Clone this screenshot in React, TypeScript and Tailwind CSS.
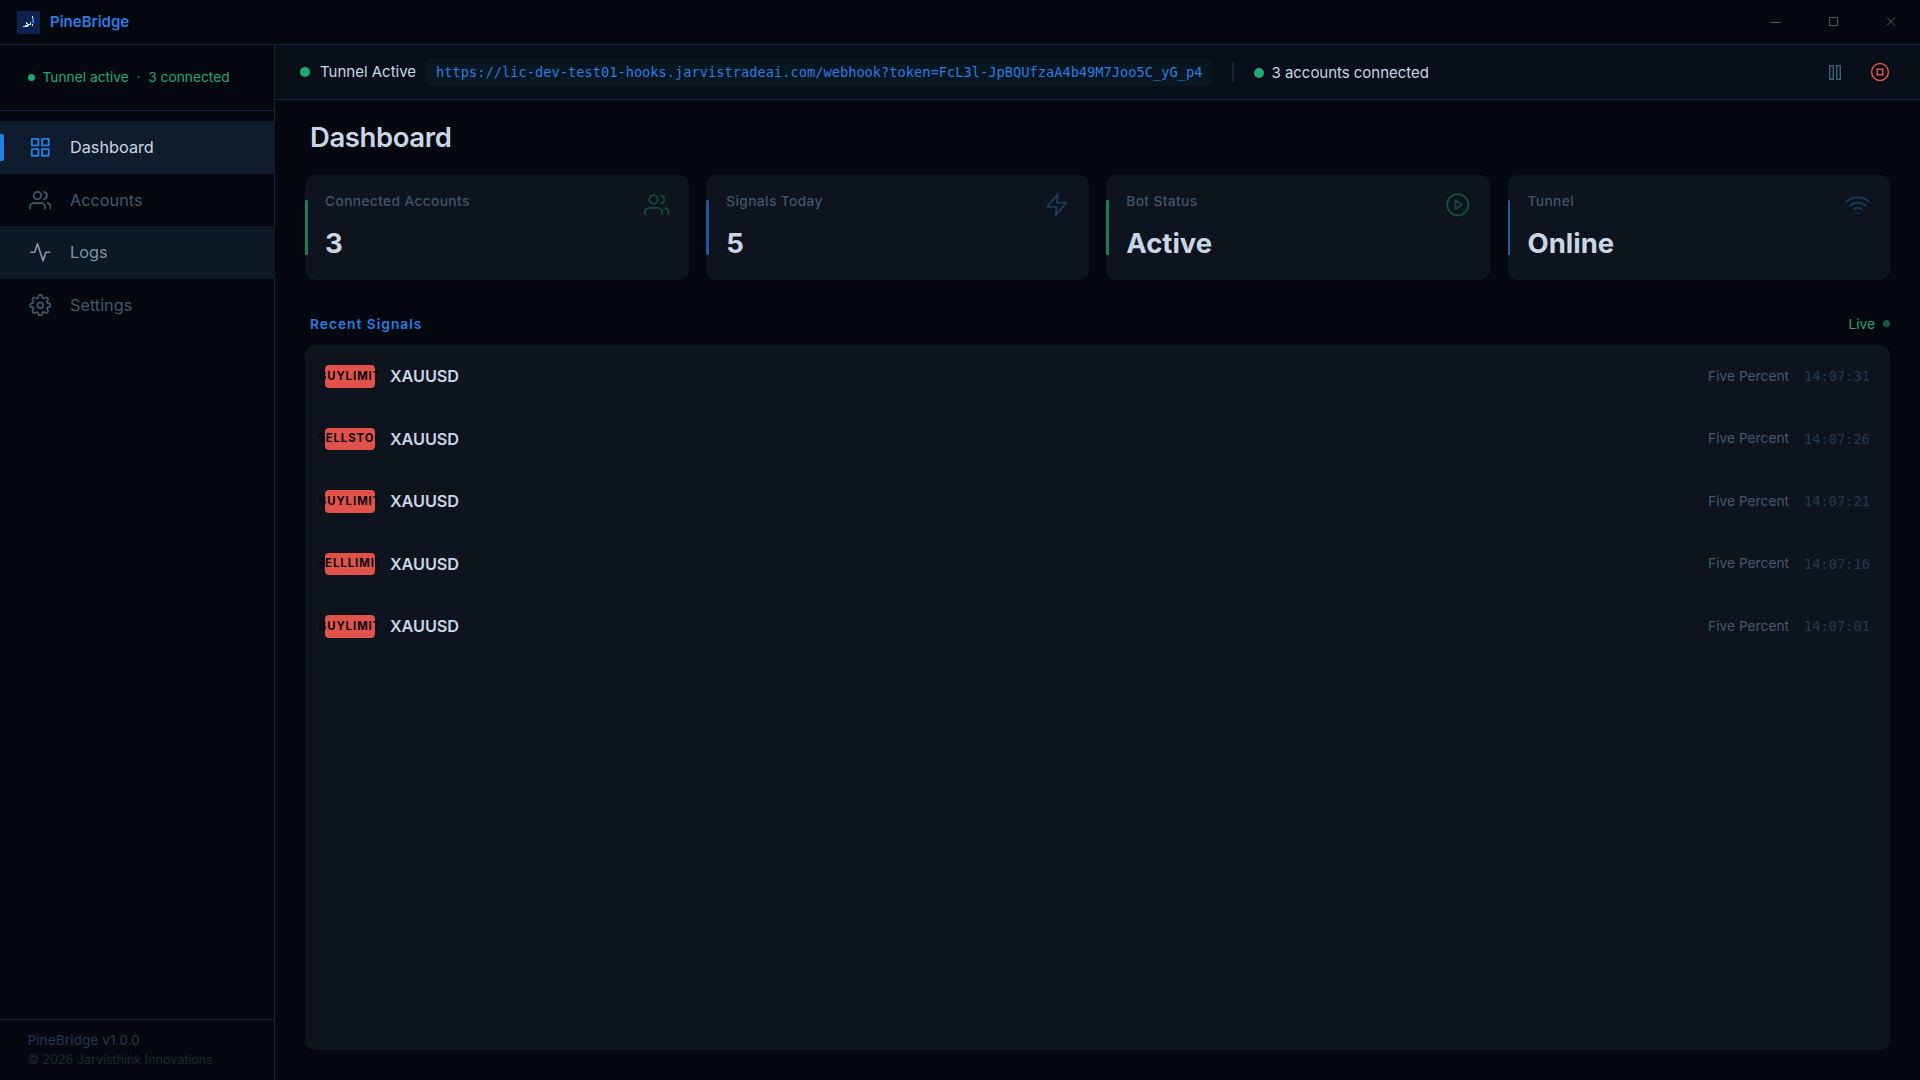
import type { ReactNode } from 'react';
import type { IconType } from 'react-icons';
import { FiActivity, FiGrid, FiPlayCircle, FiSettings, FiUsers, FiWifi, FiZap } from 'react-icons/fi';
import { cva } from 'class-variance-authority';
import clsx from 'clsx';

interface NavItem {
  label: string;
  icon: IconType;
  state: 'active' | 'hover' | 'idle';
}

interface Stat {
  label: string;
  value: string;
  icon: IconType;
  tone: 'green' | 'blue' | 'sky';
}

interface Signal {
  side: string;
  symbol: string;
  account: string;
  time: string;
}

const WEBHOOK_URL =
  'https://lic-dev-test01-hooks.jarvistradeai.com/webhook?token=FcL3l-JpBQUfzaA4b49M7Joo5C_yG_p4';

const navItems: NavItem[] = [
  { label: 'Dashboard', icon: FiGrid, state: 'active' },
  { label: 'Accounts', icon: FiUsers, state: 'idle' },
  { label: 'Logs', icon: FiActivity, state: 'hover' },
  { label: 'Settings', icon: FiSettings, state: 'idle' }
];

const stats: Stat[] = [
  { label: 'Connected Accounts', value: '3', icon: FiUsers, tone: 'green' },
  { label: 'Signals Today', value: '5', icon: FiZap, tone: 'blue' },
  { label: 'Bot Status', value: 'Active', icon: FiPlayCircle, tone: 'green' },
  { label: 'Tunnel', value: 'Online', icon: FiWifi, tone: 'sky' }
];

const signals: Signal[] = [
  { side: 'BUYLIMIT', symbol: 'XAUUSD', account: 'Five Percent', time: '14:07:31' },
  { side: 'SELLSTOP', symbol: 'XAUUSD', account: 'Five Percent', time: '14:07:26' },
  { side: 'BUYLIMIT', symbol: 'XAUUSD', account: 'Five Percent', time: '14:07:21' },
  { side: 'SELLLIMIT', symbol: 'XAUUSD', account: 'Five Percent', time: '14:07:16' },
  { side: 'BUYLIMIT', symbol: 'XAUUSD', account: 'Five Percent', time: '14:07:01' }
];

const navRow = cva('relative flex h-[52.5px] items-center gap-[18.75px] pl-[28.75px] text-[16.25px]', {
  variants: {
    state: {
      active: 'w-[275px] bg-[#0e1c2d] text-[#c9d6e3]',
      hover: 'w-[275px] bg-[#0c1824] text-[#8194a8]',
      idle: 'text-[#425a6d]'
    }
  }
});

function Dot({ className }: { className?: string }) {
  return <span className={clsx('shrink-0 rounded-full bg-[#22a872]', className)} />;
}

function Logo() {
  return (
    <svg className="h-[23px] w-[23px]" viewBox="0 0 23 23" shapeRendering="crispEdges">
      <rect width="23" height="23" fill="#0d2250" />
      <path
        d="M6 15h5v1H6zM9 11h1v1H9zM9 12h2v1H9zM10 13h4v1h-4zM8 14h4v1H8zM13 11h1v2h-1zM15 5h1v2h-1zM15 13h1v2h-1z"
        fill="#d5e0ee"
      />
      <path d="M15 7h2v5h-2z" fill="#2780e3" />
    </svg>
  );
}

function TitleBar() {
  return (
    <header className="flex h-[45px] shrink-0 items-center border-b border-[#17243a] pl-[17px]">
      <Logo />
      <span className="ml-[10px] text-[15px] font-semibold text-[#2a7de1]">PineBridge</span>
      <div className="ml-auto flex h-full items-center pr-[23px] text-[#456276]">
        <svg className="h-3 w-3" viewBox="0 0 12 12" fill="none" stroke="currentColor">
          <path d="M1.5 6.5h10" />
        </svg>
        <svg className="ml-[46px] h-3 w-3" viewBox="0 0 12 12" fill="none" stroke="currentColor">
          <rect x="2.5" y="1.5" width="8" height="8" />
        </svg>
        <svg className="ml-[46px] h-3 w-3" viewBox="0 0 12 12" fill="none" stroke="currentColor">
          <path d="M2 1.5l8 8M10 1.5l-8 8" />
        </svg>
      </div>
    </header>
  );
}

function Sidebar() {
  return (
    <aside className="flex w-[275px] shrink-0 flex-col border-r border-[#17243a]">
      <div className="flex h-[66px] items-center gap-[7.5px] border-b border-[#17243a] pl-[27.5px] text-[13.75px] text-[#22a872]">
        <Dot className="h-[7.5px] w-[7.5px]" />
        <span className="whitespace-pre">Tunnel active  ·  3 connected</span>
      </div>
      <nav className="pt-[10px]">
        {navItems.map(({ label, icon: Icon, state }) => (
          <div key={label} className={navRow({ state })}>
            {state === 'active' && (
              <span className="absolute top-[12.5px] left-0 h-[27.5px] w-1 rounded-r-[2px] bg-[#2780e3]" />
            )}
            <Icon
              className={clsx('h-[22.5px] w-[22.5px]', state === 'active' && 'text-[#2a7de1]')}
              strokeWidth={state === 'active' ? 2 : 1.8}
            />
            <span>{label}</span>
          </div>
        ))}
      </nav>
      <footer className="mt-auto h-[61px] border-t border-[#17243a] pt-[11px] pl-[27.5px]">
        <p className="text-[13.75px] leading-[19px] text-[#23394f]">PineBridge v1.0.0</p>
        <p className="text-[12.5px] leading-[19px] text-[#1a2936]">© 2026 Jarvisthink Innovations</p>
      </footer>
    </aside>
  );
}

function StatusBar() {
  return (
    <div className="flex h-[55px] shrink-0 items-center border-b border-[#17243a] bg-[#080f18] pr-[30px] pl-[25px] text-[15px] text-[#c9d6e3]">
      <Dot className="h-[10px] w-[10px]" />
      <span className="ml-[10px]">Tunnel Active</span>
      <code className="ml-[10px] flex h-[27px] items-center rounded bg-[#0a1620] px-[10px] font-['DejaVu_Sans_Mono',monospace] text-[13.7px] text-[#2a7de1]">
        {WEBHOOK_URL}
      </code>
      <span className="ml-5 h-5 w-[1.5px] bg-[#17243a]" />
      <div className="ml-5 flex items-center gap-[7.5px] pt-[2.5px]">
        <Dot className="h-[10px] w-[10px]" />
        <span className="tracking-[-0.03px]">3 accounts connected</span>
      </div>
      <svg className="ml-auto h-[15px] w-3 text-[#3d6278]" viewBox="0 0 12 15" fill="none" stroke="currentColor" strokeWidth="1.4">
        <rect x="0.7" y="0.7" width="3.6" height="13.6" />
        <rect x="7.7" y="0.7" width="3.6" height="13.6" />
      </svg>
      <svg className="ml-[29px] h-5 w-5 text-[#e0524a]" viewBox="0 0 20 20" fill="none" stroke="currentColor" strokeWidth="1.5">
        <circle cx="10" cy="10" r="8.4" />
        <rect x="7.2" y="7.2" width="5.6" height="5.6" />
      </svg>
    </div>
  );
}

function StatCard({ label, value, icon: Icon, tone }: Stat) {
  return (
    <div className="relative flex h-[105px] justify-between rounded-[10px] bg-[#0d141e] pt-[17px] pr-[19.5px] pl-5">
      <span
        className={clsx(
          'absolute top-[25px] left-0 h-[55px] w-[2.5px] rounded-[1px]',
          tone === 'green' && 'bg-[#1b7d58]',
          tone === 'blue' && 'bg-[#1d55a6]',
          tone === 'sky' && 'bg-[#1f619f]'
        )}
      />
      <div>
        <p className="text-[13.75px] leading-[18px] font-medium tracking-[0.37px] text-[#405668]">{label}</p>
        <p className="mt-[16px] text-[27.5px] leading-[34px] font-bold text-[#c9d6e3]">{value}</p>
      </div>
      <Icon
        className={clsx('h-[25.5px] w-[25.5px]', tone === 'green' ? 'text-[#184a3d]' : 'text-[#1a3a5e]')}
        strokeWidth={1.7}
      />
    </div>
  );
}

function SignalRow({ side, symbol, account, time }: Signal) {
  return (
    <li className="flex h-[62.5px] items-center border-b border-[#0c1721] px-5 pt-px">
      <span className="flex h-[22.5px] w-[50px] items-center justify-center rounded bg-[#e0524a] text-[11.25px] font-bold tracking-[1px] text-[#080c12]">
        {side}
      </span>
      <span className="ml-[15px] text-[16.25px] font-semibold tracking-[-0.08px] text-[#c9d6e3]">{symbol}</span>
      <span className="ml-auto text-[13.75px] text-[#425a6d]">{account}</span>
      <span className="ml-[15px] pt-px font-['DejaVu_Sans_Mono',monospace] text-[13.7px] text-[#23394f]">{time}</span>
    </li>
  );
}

function Page({ children }: { children: ReactNode }) {
  return (
    <div className="flex h-screen flex-col overflow-hidden bg-[#05080f] font-['Inter','Liberation_Sans',sans-serif]">
      {children}
    </div>
  );
}

export default function App() {
  return (
    <Page>
      <TitleBar />
      <div className="flex min-h-0 flex-1">
        <Sidebar />
        <main className="flex min-w-0 flex-1 flex-col">
          <StatusBar />
          <div className="flex min-h-0 flex-1 flex-col px-[30px] pb-[30px]">
            <h1 className="flex h-[75px] items-center pl-[5px] text-[27.5px] font-semibold tracking-[-0.4px] text-[#c9d6e3]">
              Dashboard
            </h1>
            <section className="grid grid-cols-[383.75px_382.5px_383.75px_382.5px] gap-[17.5px]">
              {stats.map((stat) => (
                <StatCard key={stat.label} {...stat} />
              ))}
            </section>
            <div className="flex h-[65px] items-end justify-between pb-[12.5px] pl-[5px]">
              <h2 className="text-[13.75px] leading-[18px] font-semibold tracking-[1px] text-[#2a7de1]">
                Recent Signals
              </h2>
              <div className="flex items-center gap-[7.5px] text-[13.75px] leading-[18px] text-[#22a872]">
                Live
                <Dot className="h-[7.5px] w-[7.5px] opacity-50" />
              </div>
            </div>
            <ul className="min-h-0 flex-1 rounded-[10px] bg-[#0d141e]">
              {signals.map((signal) => (
                <SignalRow key={signal.time} {...signal} />
              ))}
            </ul>
          </div>
        </main>
      </div>
    </Page>
  );
}
